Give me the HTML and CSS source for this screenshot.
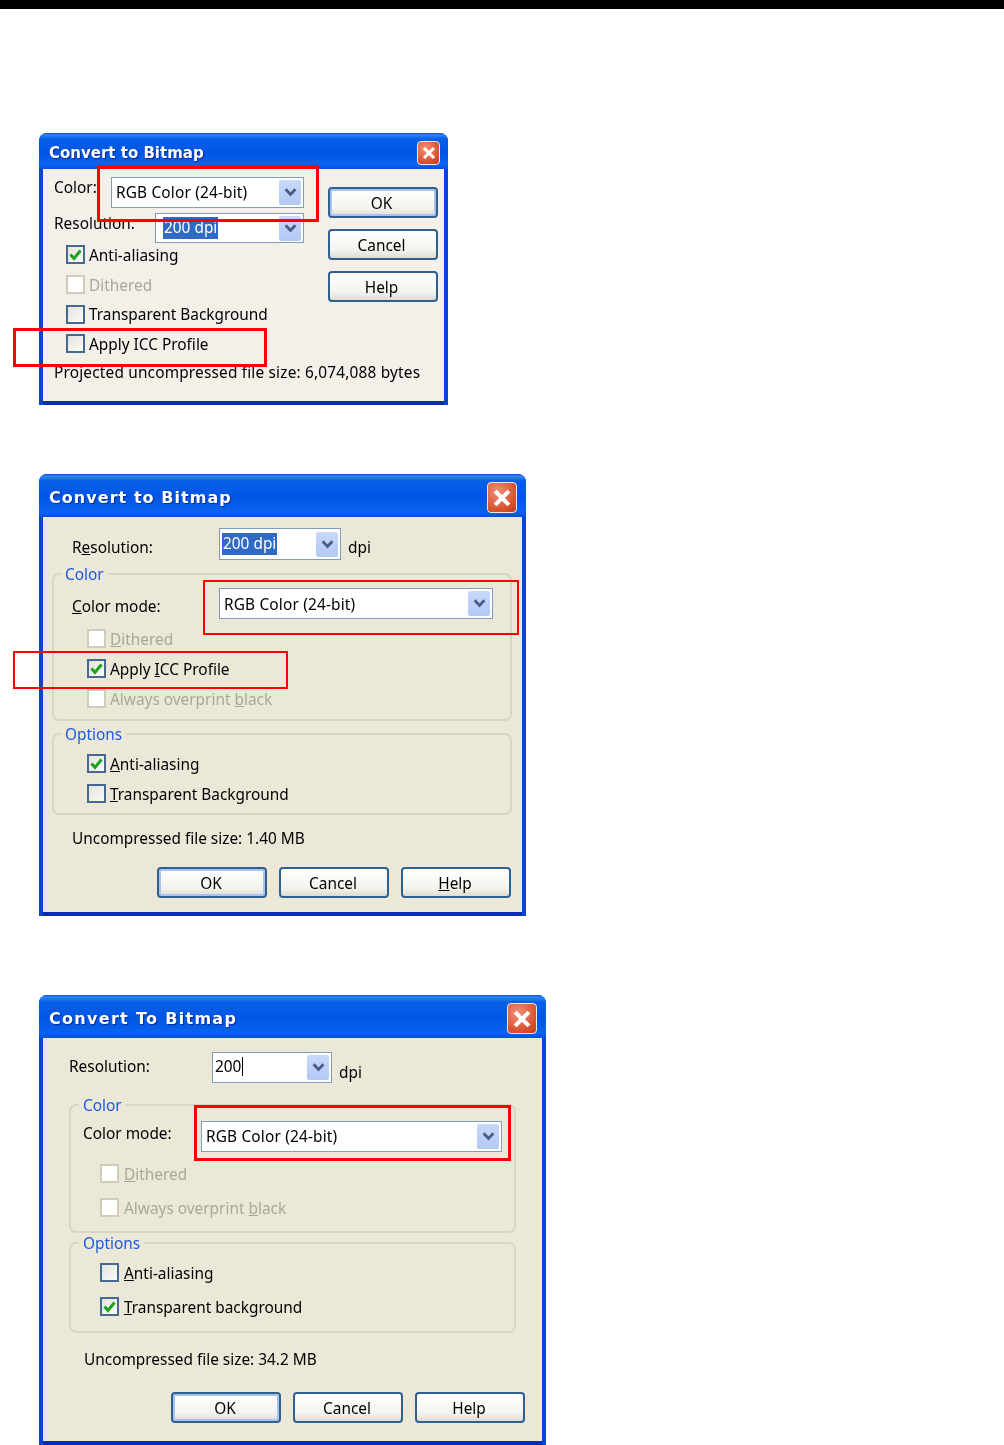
FILE: index.html
```html
<!DOCTYPE html>
<html lang="en">
<head>
    <meta charset="UTF-8">
    <title>Convert to Bitmap</title>
    <link rel="stylesheet" href="styles.css">
</head>
<body>
    <svg class="defs" width="0" height="0">
        <symbol id="chevron" viewBox="0 0 12 10"><path d="M1.5 2 6 6.8 10.5 2" fill="none" stroke="#4a5d85" stroke-width="2.6"/></symbol>
        <symbol id="tick" viewBox="0 0 15 15"><path d="M2.5 7.5 6 11.5 12.5 3.5" fill="none" stroke="#21a121" stroke-width="3"/></symbol>
        <symbol id="cross" viewBox="0 0 16 16"><path d="M3 3 13 13M13 3 3 13" fill="none" stroke="#fff" stroke-width="3"/></symbol>
    </svg>

    <div class="top-bar"></div>

    <!-- First version -->
    <div class="dialog d1">
        <div class="title-bar">
            <span class="title-text">Convert to Bitmap</span>
            <span class="close-btn"><svg><use href="#cross"/></svg></span>
        </div>
        <div class="client">
            <div class="d1-main">
                <div class="d1-left">
                    <div class="d1-row">
                        <span class="d1-label">Color:</span>
                        <div class="combo combo-wide"><span class="value">RGB Color (24-bit)</span><span class="arrow"><svg><use href="#chevron"/></svg></span></div>
                    </div>
                    <div class="d1-row second">
                        <span class="d1-label">Resolution:</span>
                        <div class="combo combo-narrow"><span class="selected">200 dpi</span><span class="arrow"><svg><use href="#chevron"/></svg></span></div>
                    </div>
                    <div class="checks">
                        <div class="check-row"><span class="box"><svg><use href="#tick"/></svg></span><span class="check-text">Anti-aliasing</span></div>
                        <div class="check-row off"><span class="box"></span><span class="check-text">Dithered</span></div>
                        <div class="check-row"><span class="box"></span><span class="check-text">Transparent Background</span></div>
                        <div class="check-row"><span class="box"></span><span class="check-text">Apply ICC Profile</span></div>
                    </div>
                </div>
                <div class="d1-buttons">
                    <div class="btn default">OK</div>
                    <div class="btn">Cancel</div>
                    <div class="btn">Help</div>
                </div>
            </div>
            <div class="status">Projected uncompressed file size: 6,074,088 bytes</div>
        </div>
    </div>

    <!-- Second version -->
    <div class="dialog d2">
        <div class="title-bar">
            <span class="title-text">Convert to Bitmap</span>
            <span class="close-btn"><svg><use href="#cross"/></svg></span>
        </div>
        <div class="client">
            <div class="res-row">
                <span class="res-label">R<u>e</u>solution:</span>
                <div class="combo"><span class="selected">200 dpi</span><span class="arrow"><svg><use href="#chevron"/></svg></span></div>
                <span class="res-unit">dpi</span>
            </div>
            <fieldset class="group group-color">
                <legend>Color</legend>
                <div class="mode-row">
                    <span class="mode-label"><u>C</u>olor mode:</span>
                    <div class="combo"><span class="value">RGB Color (24-bit)</span><span class="arrow"><svg><use href="#chevron"/></svg></span></div>
                </div>
                <div class="checks">
                    <div class="check-row off"><span class="box"></span><span class="check-text"><u>D</u>ithered</span></div>
                    <div class="check-row"><span class="box"><svg><use href="#tick"/></svg></span><span class="check-text">Apply <u>I</u>CC Profile</span></div>
                    <div class="check-row off"><span class="box"></span><span class="check-text">Always overprint <u>b</u>lack</span></div>
                </div>
            </fieldset>
            <fieldset class="group group-options">
                <legend>Options</legend>
                <div class="checks">
                    <div class="check-row"><span class="box"><svg><use href="#tick"/></svg></span><span class="check-text"><u>A</u>nti-aliasing</span></div>
                    <div class="check-row"><span class="box"></span><span class="check-text"><u>T</u>ransparent Background</span></div>
                </div>
            </fieldset>
            <div class="status">Uncompressed file size: 1.40 MB</div>
            <div class="buttons">
                <div class="btn default">OK</div>
                <div class="btn">Cancel</div>
                <div class="btn"><span><u>H</u>elp</span></div>
            </div>
        </div>
    </div>

    <!-- Third version -->
    <div class="dialog d3">
        <div class="title-bar">
            <span class="title-text">Convert To Bitmap</span>
            <span class="close-btn"><svg><use href="#cross"/></svg></span>
        </div>
        <div class="client">
            <div class="res-row">
                <span class="res-label">Resolution:</span>
                <div class="combo"><span class="typed">200</span><span class="arrow"><svg><use href="#chevron"/></svg></span></div>
                <span class="res-unit">dpi</span>
            </div>
            <fieldset class="group group-color">
                <legend>Color</legend>
                <div class="mode-row">
                    <span class="mode-label">Color mode:</span>
                    <div class="combo"><span class="value">RGB Color (24-bit)</span><span class="arrow"><svg><use href="#chevron"/></svg></span></div>
                </div>
                <div class="checks">
                    <div class="check-row off"><span class="box"></span><span class="check-text"><u>D</u>ithered</span></div>
                    <div class="check-row off"><span class="box"></span><span class="check-text">Always overprint <u>b</u>lack</span></div>
                </div>
            </fieldset>
            <fieldset class="group group-options">
                <legend>Options</legend>
                <div class="checks">
                    <div class="check-row"><span class="box"></span><span class="check-text"><u>A</u>nti-aliasing</span></div>
                    <div class="check-row"><span class="box"><svg><use href="#tick"/></svg></span><span class="check-text"><u>T</u>ransparent background</span></div>
                </div>
            </fieldset>
            <div class="status">Uncompressed file size: 34.2 MB</div>
            <div class="buttons">
                <div class="btn default">OK</div>
                <div class="btn">Cancel</div>
                <div class="btn">Help</div>
            </div>
        </div>
    </div>

    <!-- Red highlight boxes drawn on top of the screenshots -->
    <div class="mark m1"></div>
    <div class="mark m2"></div>
    <div class="mark m3"></div>
    <div class="mark m4"></div>
    <div class="mark m5"></div>
</body>
</html>
```

FILE: styles.css
```css
html, body { margin: 0; padding: 0; background: #fff; }
body { position: relative; height: 1445px; overflow: hidden; font-family: "Noto Sans", sans-serif; font-size: 15.4px; line-height: 20px; color: #000; }
.defs { position: absolute; }
.top-bar { height: 9px; background: #000; }

/* Window frame */
.dialog {
    box-sizing: border-box;
    margin-left: 39px;
    display: flex;
    flex-direction: column;
    background: #0a44d6;
    border-radius: 8px 8px 0 0;
    filter: blur(0.5px);
    overflow: hidden;
}
.d1 { width: 409px; height: 272px; margin-top: 124px; }
.d2 { width: 487px; height: 442px; margin-top: 69px; }
.d3 { width: 507px; height: 450px; margin-top: 79px; }

.title-bar {
    box-sizing: border-box;
    flex: none;
    display: flex;
    align-items: center;
    justify-content: space-between;
    height: 43px;
    padding: 4px 9px 0 10px;
    background: linear-gradient(#0a4fd6 0, #2f86f5 5%, #0a5fe8 16%, #0055e5 55%, #0a63ee 88%, #0550d8 100%);
}
.d1 .title-bar { height: 36px; padding-right: 8px; }
.title-text { font-family: "DejaVu Sans", sans-serif; font-weight: bold; font-size: 16px; color: #fff; letter-spacing: 1.05px; text-shadow: 1px 1px 1px #0a2a90; }
.d1 .title-text { font-size: 15px; letter-spacing: 0; }
.d3 .title-text { letter-spacing: 1.3px; }
.close-btn {
    box-sizing: border-box;
    display: flex;
    align-items: center;
    justify-content: center;
    width: 30px;
    height: 31px;
    border: 1px solid #e8e8f0;
    border-radius: 4px;
    background: radial-gradient(circle at 35% 30%, #f0907a, #d9532f 65%, #c23d1c);
}
.close-btn svg { width: 22px; height: 22px; }
.d1 .close-btn { width: 23px; height: 24px; }
.d1 .close-btn svg { width: 16px; height: 16px; }

.client {
    flex: 1;
    margin: 0 4px 4px;
    background: #ebe8d8;
    box-shadow: 0 4px 0 #0a2cb0;
}
.d1 .client { background: #f2f0e8; }

/* Combo boxes */
.combo {
    box-sizing: border-box;
    display: flex;
    align-items: center;
    justify-content: space-between;
    height: 31px;
    padding: 0 2px 0 4px;
    background: #fff;
    border: 1px solid #7f9db9;
}
.value { letter-spacing: 0.17px; }
.d2 .value { padding-top: 3px; }
.arrow {
    display: flex;
    align-items: center;
    justify-content: center;
    width: 22px;
    height: 25px;
    border-radius: 2px;
    background: linear-gradient(#c9d8fb, #b2c8f7);
}
.arrow svg { width: 13px; height: 11px; }
.selected { margin-left: -2px; padding: 1px; background: #316ac5; color: #fff; }
.d1 .selected { margin: 0 0 1px 3px; }
.typed { margin: 0 0 2px -2px; padding-right: 1px; border-right: 1px solid #000; line-height: 19px; }

/* Check boxes */
.check-row { display: flex; align-items: center; gap: 4px; height: 30px; }
.check-text { margin-top: 4px; }
.box {
    box-sizing: border-box;
    flex: none;
    display: flex;
    align-items: center;
    justify-content: center;
    width: 19px;
    height: 19px;
    border: 2px solid #46698f;
    background: linear-gradient(135deg, #e4e3dc, #fbfbf8);
}
.box svg { width: 15px; height: 15px; }
.off { color: #a9a797; }
.off .box { border-color: #cfccba; background: #fff; }

/* Buttons */
.btn {
    box-sizing: border-box;
    display: flex;
    align-items: center;
    justify-content: center;
    width: 110px;
    height: 31px;
    padding: 2px 2px 0 0;
    border: 2px solid #2f6090;
    border-radius: 4px;
    background: linear-gradient(#fff, #f4f3ee 70%, #dedcd2);
}
.default { box-shadow: inset 0 0 0 2px #a8c4ec; }
.buttons { display: flex; justify-content: flex-end; gap: 12px; }

/* Group boxes */
.group { margin: 0; border: 2px solid #d8d5c3; border-radius: 7px; min-width: 0; }
.group legend { padding: 2px 4px 0; line-height: 18px; color: #1a5ae0; }
.mode-row, .res-row { display: flex; align-items: flex-start; }
.res-unit { margin-left: 7px; }

/* First dialog */
.d1-main { display: flex; gap: 24px; padding-left: 11px; }
.d1-left { width: 250px; padding-top: 8px; }
.d1-row { display: flex; align-items: flex-start; justify-content: space-between; }
.d1-row.second { margin-top: 5px; }
.d1-label { margin-top: 1px; }
.d1 .combo-wide { width: 193px; }
.d1 .combo-narrow { width: 149px; height: 30px; }
.d1 .checks { margin: -3px 0 0 12px; height: 120px; }
.d1 .check-row { height: 29.7px; }
.d1 .check-text { margin-top: 2px; }
.d1-buttons { display: flex; flex-direction: column; gap: 11px; padding-top: 18px; }
.d1 .btn { padding-right: 3px; }
.d1 .status { margin: 3px 0 0 11px; letter-spacing: 0.18px; }

/* Second dialog */
.d2 .client { padding: 11px 10px 0 9px; }
.d2 .res-row { padding-left: 20px; height: 32px; }
.d2 .res-row .combo { width: 122px; height: 32px; }
.d2 .res-label { width: 147px; margin-top: 10px; }
.d2 .res-unit { margin-top: 10px; }
.d2 .group { padding: 0 0 6px 18px; }
.d2 .group legend { margin-left: -11px; }
.d2 .group-color { margin-top: 4px; }
.d2 .group-options { margin-top: 3px; padding-bottom: 5px; }
.d2 .mode-row { margin-top: 4px; }
.d2 .mode-label { width: 147px; margin-top: 9px; }
.d2 .mode-row .combo { width: 274px; }
.d2 .checks { margin-left: 15px; }
.d2 .group-color .checks { margin-top: 4px; }
.d2 .group-options .checks { margin-top: 4px; }
.d2 .status { margin: 14px 0 0 20px; }
.d2 .buttons { margin: 18px 1px 0 0; }

/* Third dialog */
.d3 .client { padding: 14px 26px 0 26px; }
.d3 .res-row { height: 31px; }
.d3 .res-row .combo { width: 120px; }
.d3 .res-label { width: 143px; margin-top: 5px; }
.d3 .res-unit { margin-top: 11px; }
.d3 .group { padding: 0 0 7px 12px; }
.d3 .group legend { margin-left: -4px; }
.d3 .group-color { margin-top: 12px; }
.d3 .group-options { margin-top: 0; padding-bottom: 8px; }
.d3 .mode-row { margin-top: 6px; }
.d3 .mode-label { width: 118px; margin-top: 3px; }
.d3 .mode-row .combo { width: 301px; }
.d3 .checks { margin-left: 17px; }
.d3 .check-row { height: 34px; gap: 5px; }
.d3 .group-color .checks { margin-top: 4px; }
.d3 .group-options .checks { margin-top: 2px; }
.d3 .status { margin: 17px 0 0 15px; }
.d3 .buttons { margin: 22px -9px 0 0; }

/* Red highlight boxes */
.mark { position: absolute; box-sizing: border-box; border: 2px solid #f00; }
.m1 { left: 97px; top: 166px; width: 222px; height: 56px; border-width: 3px; }
.m2 { left: 13px; top: 328px; width: 254px; height: 39px; border-width: 3px; }
.m3 { left: 203px; top: 580px; width: 316px; height: 55px; }
.m4 { left: 13px; top: 651px; width: 275px; height: 38px; }
.m5 { left: 194px; top: 1105px; width: 317px; height: 56px; border-width: 3px; }
```
